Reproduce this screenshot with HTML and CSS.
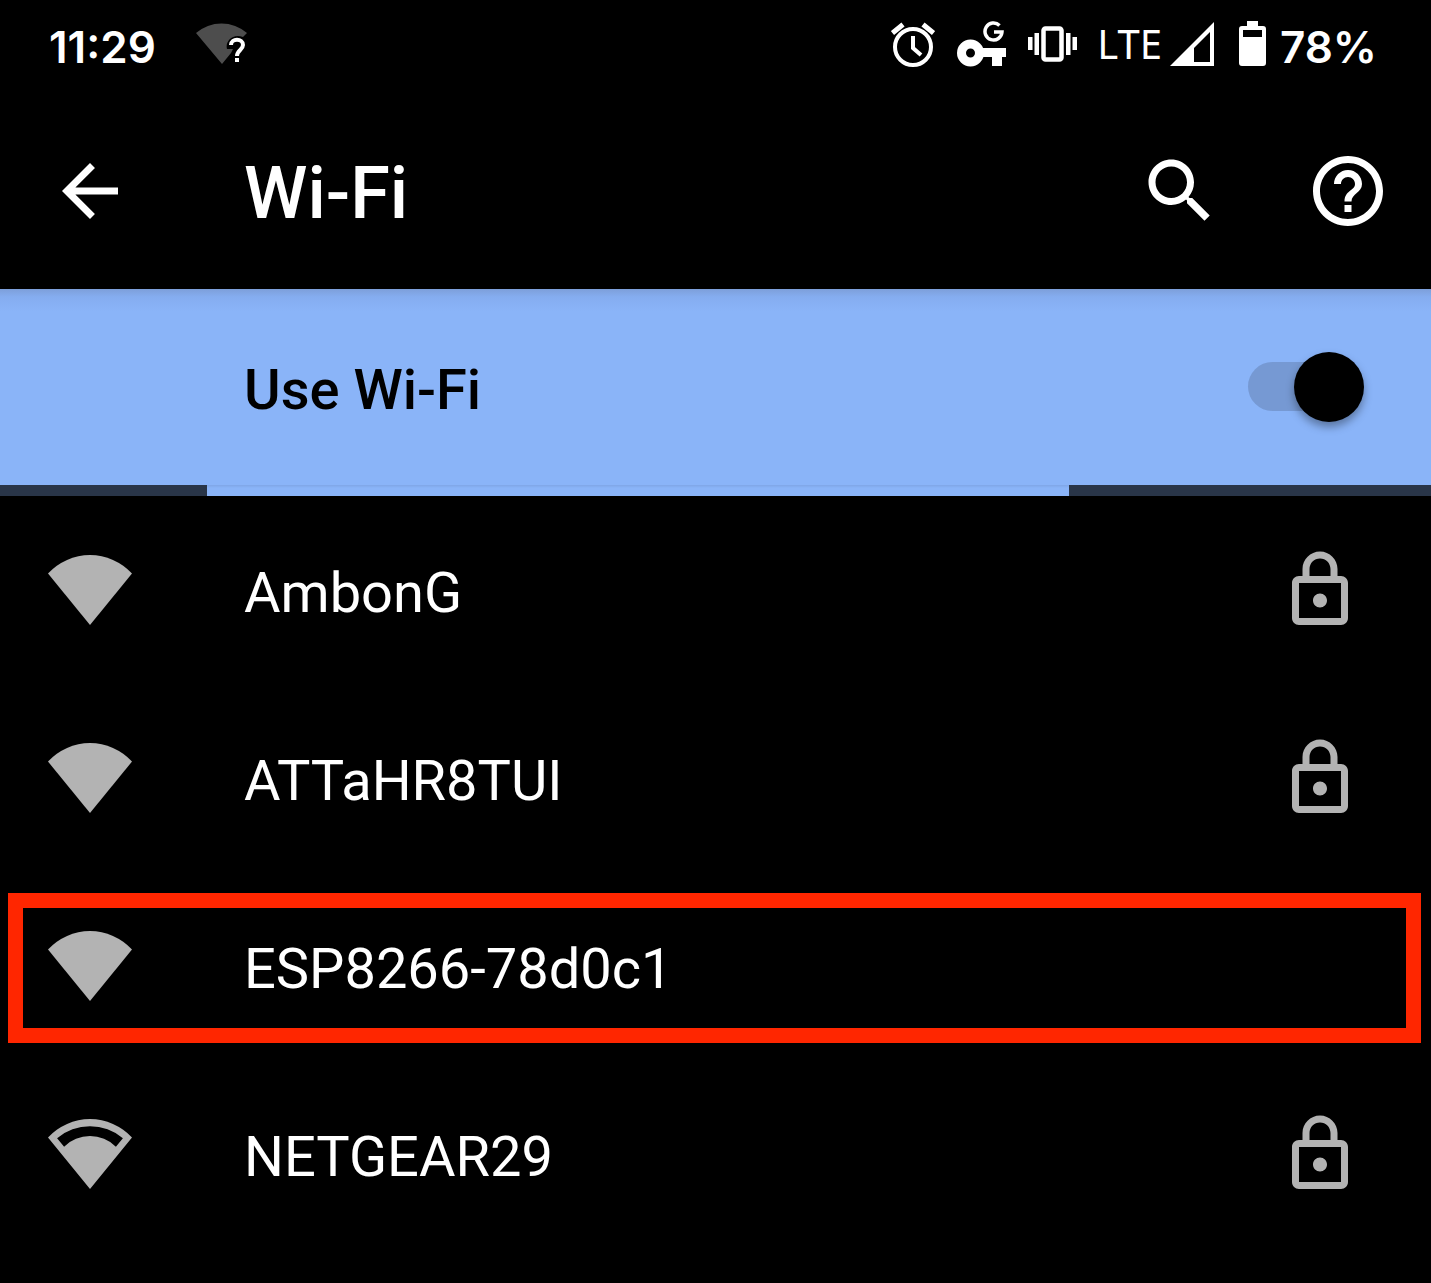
FILE: index.html
```html
<!DOCTYPE html>
<html lang="en">
<head>
<meta charset="utf-8">
<meta name="viewport" content="width=device-width, initial-scale=1">
<title>Wi-Fi</title>
<link rel="stylesheet" href="styles.css">
</head>
<body>
<svg class="defs" aria-hidden="true">
  <symbol id="wifi-full" viewBox="0 0 24 24"><path d="M12 22 0 7.3A16.3 16.3 0 0 1 24 7.3Z"/></symbol>
  <symbol id="wifi-medium" viewBox="0 0 24 24"><path fill-rule="evenodd" d="M12 22 0 7.3A16.3 16.3 0 0 1 24 7.3ZM4.6 9.9A10.6 10.6 0 0 1 19.4 9.9L21.4 7.5A14.6 14.6 0 0 0 2.6 7.5Z"/></symbol>
  <symbol id="lock" viewBox="0 0 24 24"><path d="M18 8h-1V6c0-2.76-2.24-5-5-5S7 3.24 7 6v2H6c-1.1 0-2 .9-2 2v10c0 1.1.9 2 2 2h12c1.1 0 2-.9 2-2V10c0-1.1-.9-2-2-2zM9 6c0-1.66 1.34-3 3-3s3 1.34 3 3v2H9V6zm9 14H6V10h12v10zm-6-3c1.1 0 2-.9 2-2s-.9-2-2-2-2 .9-2 2 .9 2 2 2z"/></symbol>
</svg>

<div class="status-bar">
  <div class="status-group status-left">
    <span class="status-text">11:29</span>
    <svg class="status-wifi" viewBox="0 0 52 42" role="img" aria-label="Wi-Fi, no internet">
      <path fill="#4d4d4d" d="M26 41 0 10A39 39 0 0 1 51 10L47 14C36 10 29 19 31 26H37L35 30Z"/>
      <path fill="none" stroke="#fff" stroke-width="4" d="M35 22C35 15 47 15 47 22C47 27 41 27 41 33"/>
      <path fill="#fff" d="M39 35h4v4h-4z"/>
    </svg>
  </div>
  <div class="status-group status-right">
    <svg class="icon-alarm" viewBox="0 0 44 45" role="img" aria-label="Alarm">
      <g fill="none" stroke="#fff" stroke-width="4"><circle cx="22" cy="25" r="18"/><path stroke-width="5" d="M1.500 11 12 2.500M42.500 11 32 2.500"/><path d="M22 14v12l8 7"/></g>
    </svg>
    <svg class="icon-vpn" viewBox="0 0 49 46" role="img" aria-label="VPN">
      <circle cx="13.500" cy="32" r="9" fill="none" stroke="#fff" stroke-width="9"/>
      <path fill="#fff" d="M23 27h26v9h-4v9h-10v-9H23z"/>
      <path fill="none" stroke="#fff" stroke-width="3.500" d="M42.500 4.500A8.500 8.500 0 1 0 45 11H37"/>
    </svg>
    <svg class="icon-vibrate" viewBox="0 0 49 36" role="img" aria-label="Vibrate">
      <rect x="15.500" y="2.500" width="18" height="31" rx="2" fill="none" stroke="#fff" stroke-width="4.500"/>
      <path fill="#fff" d="M0 11h4.500v13H0zM6.500 7h4.500v22H6.500zM38 7h4.500v22h-4.500zM44.500 11h4.500v13h-4.500z"/>
    </svg>
    <span class="status-network">LTE</span>
    <svg class="icon-signal" viewBox="0 0 44 44" role="img" aria-label="Mobile signal">
      <path fill="#fff" fill-rule="evenodd" d="M0 44 44 0V44ZM24 26V40H40V10Z"/>
    </svg>
    <svg class="icon-battery" viewBox="0 0 27 46" role="img" aria-label="Battery">
      <path fill="#fff" fill-rule="evenodd" d="M8 0h11v5h5q3 0 3 3v34q0 3-3 3H3q-3 0-3-3V8q0-3 3-3h5zM4 9v7h19V9z"/>
    </svg>
    <span class="status-text">78%</span>
  </div>
</div>

<header class="app-bar">
  <button class="icon-button" type="button" aria-label="Back"><svg viewBox="0 0 24 24"><path d="M20 11H7.830l5.590-5.590L12 4l-8 8 8 8 1.410-1.410L7.830 13H20v-2z"/></svg></button>
  <h1 class="title">Wi-Fi</h1>
  <button class="icon-button" type="button" aria-label="Search"><svg viewBox="0 0 24 24"><path d="M15.500 14h-.790l-.280-.270C15.410 12.590 16 11.110 16 9.500 16 5.910 13.090 3 9.500 3S3 5.910 3 9.500 5.910 16 9.500 16c1.610 0 3.090-.590 4.230-1.570l.270.280v.790l5 4.990L20.490 19l-4.990-5zm-6 0C7.010 14 5 11.990 5 9.500S7.010 5 9.500 5 14 7.010 14 9.500 11.990 14 9.500 14z"/></svg></button>
  <button class="icon-button" type="button" aria-label="Help"><svg viewBox="0 0 24 24"><path d="M11 18h2v-2h-2v2zm1-16C6.480 2 2 6.480 2 12s4.480 10 10 10 10-4.480 10-10S17.520 2 12 2zm0 18c-4.410 0-8-3.590-8-8s3.590-8 8-8 8 3.590 8 8-3.590 8-8 8zm0-14c-2.210 0-4 1.790-4 4h2c0-1.100.900-2 2-2s2 .900 2 2c0 2-3 1.750-3 5h2c0-2.250 3-2.500 3-5 0-2.210-1.790-4-4-4z"/></svg></button>
</header>

<main>
  <div class="switch-bar">
    <label class="switch-label" for="use-wifi">Use Wi-Fi</label>
    <input class="switch" id="use-wifi" type="checkbox" role="switch" checked>
  </div>
  <div class="progress" role="progressbar" aria-label="Scanning for networks"><div class="progress-fill"></div></div>

  <ul class="networks">
    <li><button class="network" type="button"><svg><use href="#wifi-full"/></svg><span class="network-name">AmbonG</span><svg><use href="#lock"/></svg></button></li>
    <li><button class="network" type="button"><svg><use href="#wifi-full"/></svg><span class="network-name">ATTaHR8TUI</span><svg><use href="#lock"/></svg></button></li>
    <li class="highlighted"><button class="network" type="button"><svg><use href="#wifi-full"/></svg><span class="network-name">ESP8266-78d0c1</span></button></li>
    <li><button class="network" type="button"><svg><use href="#wifi-medium"/></svg><span class="network-name">NETGEAR29</span><svg><use href="#lock"/></svg></button></li>
  </ul>
</main>
</body>
</html>
```

FILE: styles.css
```css
* { box-sizing: border-box; }

body {
  margin: 0;
  min-height: 100vh;
  background: #000;
  color: #fff;
  font-family: Roboto, "Liberation Sans", sans-serif;
}

svg { display: block; flex: none; }
button { border: 0; padding: 0; background: none; color: inherit; font: inherit; }
.defs { position: absolute; width: 0; height: 0; }

.status-bar {
  display: flex;
  justify-content: space-between;
  height: 93px;
  padding: 0 54px 5px 49px;
}
.status-group { display: flex; align-items: center; }
.status-left { gap: 40px; }
.status-text { font-family: Inter, sans-serif; font-size: 44px; font-weight: 600; line-height: 56px; padding-top: 6px; }
.status-wifi { width: 52px; height: 42px; }
.icon-alarm { width: 44px; height: 45px; margin-right: 22px; }
.icon-vpn { width: 49px; height: 46px; margin-right: 22px; }
.icon-vibrate { width: 49px; height: 36px; margin-right: 20px; }
.status-network { font-family: "Noto Sans", sans-serif; font-size: 40px; line-height: 56px; margin-right: 8px; }
.icon-signal { width: 44px; height: 44px; margin-right: 25px; }
.icon-battery { width: 27px; height: 46px; margin-right: 14px; }

.app-bar {
  display: flex;
  align-items: center;
  gap: 84px;
  height: 196px;
  padding: 0 41px 0 48px;
}
.icon-button { width: 84px; height: 84px; flex: none; }
.icon-button svg { width: 84px; height: 84px; fill: #fff; }
.title { flex: 1; margin: 0; padding: 6px 0 0 28px; font-size: 72px; font-weight: 500; line-height: 84px; }

.switch-bar {
  display: flex;
  align-items: center;
  justify-content: space-between;
  height: 196px;
  padding: 0 67px 0 244px;
  background: linear-gradient(#7d9fda, #85adf0 8px, #8ab4f8 22px);
  color: #000;
}
.switch-label { font-size: 56px; font-weight: 500; line-height: 68px; padding-top: 6px; }
.switch {
  appearance: none;
  position: relative;
  width: 116px;
  height: 70px;
  margin: 0;
}
.switch::before {
  content: "";
  position: absolute;
  inset: 10px 4px 11px 0;
  border-radius: 25px;
  background: #7699d3;
}
.switch::after {
  content: "";
  position: absolute;
  top: 0;
  right: 0;
  width: 70px;
  height: 70px;
  border-radius: 50%;
  background: #000;
  box-shadow: 0 5px 8px rgba(0, 0, 0, .35);
}

.progress { height: 11px; background: #293548; }
.progress-fill {
  width: 60.24%;
  height: 100%;
  margin-left: 14.46%;
  background: linear-gradient(#7fa6e6, #8ab4f8 3px);
}

.networks { margin: 0; padding: 0; list-style: none; }
.network {
  display: flex;
  align-items: center;
  width: 100%;
  height: 188px;
  padding: 0 69px 0 48px;
  text-align: left;
}
.network svg { width: 84px; height: 84px; fill: #b3b3b3; }
.network-name { flex: 1; padding: 6px 0 0 112px; font-size: 56px; line-height: 68px; }
.highlighted { position: relative; }
.highlighted::after {
  content: "";
  position: absolute;
  inset: 21px 10px 17px 8px;
  border: 15px solid #ff2600;
  pointer-events: none;
}
```
